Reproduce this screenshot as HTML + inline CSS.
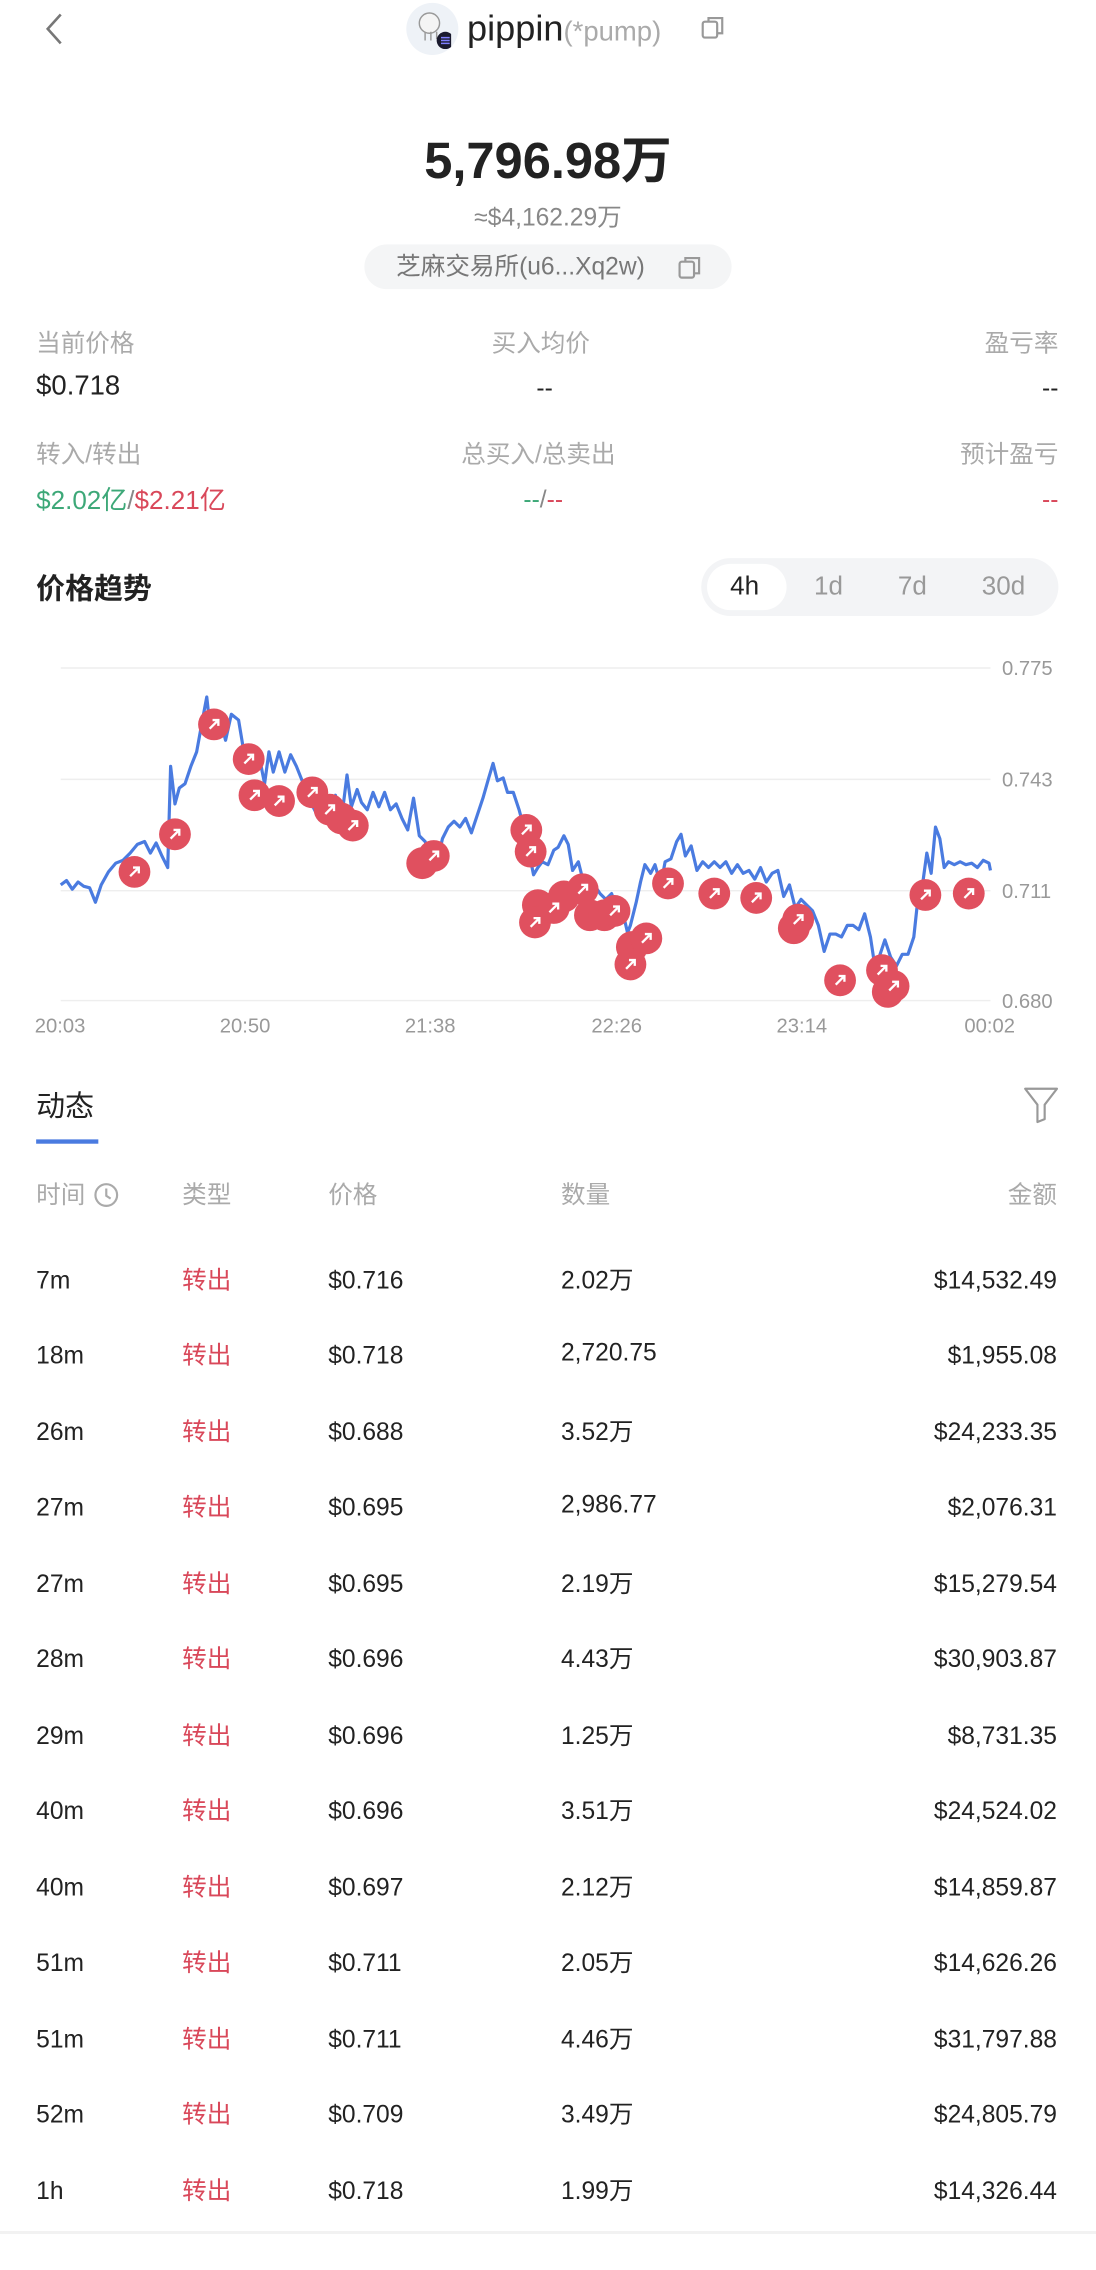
<!DOCTYPE html>
<html><head><meta charset="utf-8">
<style>
html,body{margin:0;padding:0;background:#fff;}
body{width:1096px;height:2270px;overflow:hidden;}
#w{width:758px;height:1570px;position:relative;transform:scale(1.44591);transform-origin:0 0;font-family:"Liberation Sans","Noto Sans CJK SC",sans-serif;color:#222;}
.a{position:absolute;white-space:nowrap;line-height:1.15em;}
.g{color:#aaa;}
.row{position:absolute;left:0;width:758px;height:20px;font-size:17px;}
.row span{position:absolute;top:3px;line-height:20px;}
</style></head><body><div id="w">
<svg class="a" style="left:28px;top:8px" width="20" height="24" viewBox="0 0 20 24"><path d="M14 2 L5 12 L14 22" fill="none" stroke="#777" stroke-width="1.8"/></svg>
<div class="a" style="left:281px;top:2px;width:36px;height:36px;border-radius:50%;background:#eef2f7"></div>
<svg class="a" style="left:286px;top:4px" width="26" height="30" viewBox="0 0 26 30"><circle cx="11" cy="12" r="7" fill="#f4f4f4" stroke="#999" stroke-width="1"/><path d="M8 18 v6 M12 18 v6 M16 18 v5" stroke="#999" stroke-width="1"/><circle cx="22" cy="24" r="6" fill="#1a1a2e"/><path d="M19 22h6M19 24h6M19 26h6" stroke="#7f7fff" stroke-width="1"/></svg>
<div class="a" style="left:323px;top:6px;font-size:25px;color:#222">pippin<span style="color:#aaa;font-size:19px">(*pump)</span></div>
<svg class="a" style="left:484px;top:10px" width="18" height="18" viewBox="0 0 18 18"><rect x="2" y="5" width="10" height="11" rx="1.5" fill="none" stroke="#999" stroke-width="1.5"/><path d="M6 5V2.5h9.5V13H12" fill="none" stroke="#999" stroke-width="1.5"/></svg>
<div class="a" style="left:0;width:758px;text-align:center;top:92px;font-size:35px;font-weight:bold;color:#222">5,796.98万</div>
<div class="a" style="left:0;width:758px;text-align:center;top:141px;font-size:17px;color:#888">≈$4,162.29万</div>
<div class="a" style="left:252px;top:169px;width:254px;height:31px;border-radius:16px;background:#f4f5f6"></div>
<div class="a" style="left:274px;top:175px;font-size:17px;color:#777">芝麻交易所(u6...Xq2w)</div>
<svg class="a" style="left:468px;top:176px" width="18" height="18" viewBox="0 0 18 18"><rect x="2" y="5" width="10" height="11" rx="1.5" fill="none" stroke="#999" stroke-width="1.5"/><path d="M6 5V2.5h9.5V13H12" fill="none" stroke="#999" stroke-width="1.5"/></svg>

<div class="a g" style="left:25px;top:228px;font-size:17px">当前价格</div>
<div class="a g" style="left:340px;top:228px;font-size:17px">买入均价</div>
<div class="a g" style="right:26px;top:228px;font-size:17px">盈亏率</div>
<div class="a" style="left:25px;top:257px;font-size:19px">$0.718</div>
<div class="a" style="left:371px;top:259px;font-size:17px">--</div>
<div class="a" style="right:26px;top:259px;font-size:17px">--</div>
<div class="a g" style="left:25px;top:305px;font-size:17px">转入/转出</div>
<div class="a g" style="left:319px;top:305px;font-size:17px">总买入/总卖出</div>
<div class="a g" style="right:26px;top:305px;font-size:17px">预计盈亏</div>
<div class="a" style="left:25px;top:336px;font-size:18px"><span style="color:#3da878">$2.02亿</span><span style="color:#888">/</span><span style="color:#d9485a">$2.21亿</span></div>
<div class="a" style="left:362px;top:336px;font-size:17px"><span style="color:#3da878">--</span><span style="color:#888">/</span><span style="color:#d9485a">--</span></div>
<div class="a" style="right:26px;top:336px;font-size:17px;color:#d9485a">--</div>

<div class="a" style="left:25px;top:397px;font-size:20px;font-weight:bold">价格趋势</div>
<div class="a" style="left:485px;top:386px;width:247px;height:40px;border-radius:20px;background:#f3f4f6"></div>
<div class="a" style="left:489px;top:390px;width:55px;height:32px;border-radius:16px;background:#fff"></div>
<div class="a" style="left:505px;top:395px;font-size:18px;color:#222">4h</div>
<div class="a" style="left:563px;top:395px;font-size:18px;color:#999">1d</div>
<div class="a" style="left:621px;top:395px;font-size:18px;color:#999">7d</div>
<div class="a" style="left:679px;top:395px;font-size:18px;color:#999">30d</div>

<svg class="a" style="left:0;top:440px" width="758" height="290" viewBox="0 440 758 290">
<g stroke="#eee" stroke-width="1"><line x1="42" y1="462" x2="685" y2="462"/><line x1="42" y1="539" x2="685" y2="539"/><line x1="42" y1="616" x2="685" y2="616"/><line x1="42" y1="692" x2="685" y2="692"/></g>
<g font-family="Liberation Sans" font-size="14" fill="#999"><text x="693" y="467">0.775</text><text x="693" y="544">0.743</text><text x="693" y="621">0.711</text><text x="693" y="697">0.680</text>
<text x="24" y="714">20:03</text><text x="152" y="714">20:50</text><text x="280" y="714">21:38</text><text x="409" y="714">22:26</text><text x="537" y="714">23:14</text><text x="667" y="714">00:02</text></g>
<polyline fill="none" stroke="#4a7be0" stroke-width="2.2" stroke-linejoin="round" points="42,612 46,609 50,615 54,610 58,613 62,614 66,624 70,612 75,603 80,597 85,595 90,590 95,584 100,582 104,590 108,583 112,592 116,600 118,530 121,556 124,545 128,542 132,530 136,520 140,498 143,482 146,510 149,492 153,500 156,512 160,494 165,498 168,516 172,526 175,530 179,522 183,542 186,520 189,534 193,520 197,534 201,522 205,530 209,540 213,548 216,557 220,565 224,545 228,562 232,550 236,568 240,536 243,558 247,546 250,555 254,560 258,548 262,558 266,548 270,560 274,556 278,566 282,574 286,552 290,578 294,582 298,592 302,598 306,580 310,572 314,568 318,572 322,566 326,576 330,564 334,552 338,538 341,528 344,540 348,538 351,548 355,548 359,560 363,575 366,590 369,605 372,600 375,596 379,598 383,588 386,586 390,578 393,584 396,602 400,596 403,608 407,616 411,612 415,618 419,622 423,618 427,630 431,632 434,645 436,640 440,624 443,610 446,598 450,604 453,598 457,612 460,596 464,594 468,582 471,577 474,592 478,585 482,602 486,596 490,600 494,596 498,600 502,596 506,604 510,598 514,604 518,602 522,608 526,600 530,610 534,604 538,602 542,620 546,612 550,628 554,622 558,626 562,630 566,640 570,658 574,646 578,646 582,648 586,640 590,640 594,643 598,632 602,648 605,668 608,662 612,650 616,662 620,668 624,660 628,660 632,648 635,620 638,612 641,590 644,604 647,572 650,580 653,600 656,596 660,598 664,596 668,598 672,597 676,600 680,595 684,597 685,602"/>
<g fill="#e0505f"><circle cx="93" cy="603" r="11"/><circle cx="121" cy="577" r="11"/><circle cx="148" cy="501" r="11"/><circle cx="172" cy="525" r="11"/><circle cx="176" cy="550" r="11"/><circle cx="193" cy="554" r="11"/><circle cx="216" cy="548" r="11"/><circle cx="228" cy="560" r="11"/><circle cx="236" cy="566" r="11"/><circle cx="244" cy="571" r="11"/><circle cx="292" cy="597" r="11"/><circle cx="300" cy="592" r="11"/><circle cx="364" cy="574" r="11"/><circle cx="367" cy="589" r="11"/><circle cx="372" cy="626" r="11"/><circle cx="370" cy="638" r="11"/><circle cx="383" cy="628" r="11"/><circle cx="390" cy="620" r="11"/><circle cx="403" cy="615" r="11"/><circle cx="408" cy="633" r="11"/><circle cx="418" cy="633" r="11"/><circle cx="425" cy="630" r="11"/><circle cx="437" cy="655" r="11"/><circle cx="436" cy="667" r="11"/><circle cx="447" cy="649" r="11"/><circle cx="462" cy="611" r="11"/><circle cx="494" cy="618" r="11"/><circle cx="523" cy="621" r="11"/><circle cx="549" cy="642" r="11"/><circle cx="552" cy="636" r="11"/><circle cx="581" cy="678" r="11"/><circle cx="610" cy="671" r="11"/><circle cx="614" cy="686" r="11"/><circle cx="618" cy="682" r="11"/><circle cx="640" cy="619" r="11"/><circle cx="670" cy="618" r="11"/></g>
<g stroke="#fff" stroke-width="1.6" fill="none">
<path d="M90 606l6-6m-4 0h4v4"/><path d="M118 580l6-6m-4 0h4v4"/><path d="M145 504l6-6m-4 0h4v4"/><path d="M169 528l6-6m-4 0h4v4"/><path d="M173 553l6-6m-4 0h4v4"/><path d="M190 557l6-6m-4 0h4v4"/><path d="M213 551l6-6m-4 0h4v4"/><path d="M225 563l6-6m-4 0h4v4"/><path d="M241 574l6-6m-4 0h4v4"/><path d="M297 595l6-6m-4 0h4v4"/><path d="M361 577l6-6m-4 0h4v4"/><path d="M364 592l6-6m-4 0h4v4"/><path d="M367 641l6-6m-4 0h4v4"/><path d="M380 631l6-6m-4 0h4v4"/><path d="M400 618l6-6m-4 0h4v4"/><path d="M422 633l6-6m-4 0h4v4"/><path d="M433 670l6-6m-4 0h4v4"/><path d="M444 652l6-6m-4 0h4v4"/><path d="M459 614l6-6m-4 0h4v4"/><path d="M491 621l6-6m-4 0h4v4"/><path d="M520 624l6-6m-4 0h4v4"/><path d="M549 639l6-6m-4 0h4v4"/><path d="M578 681l6-6m-4 0h4v4"/><path d="M607 674l6-6m-4 0h4v4"/><path d="M615 685l6-6m-4 0h4v4"/><path d="M637 622l6-6m-4 0h4v4"/><path d="M667 621l6-6m-4 0h4v4"/></g>
</svg>

<div class="a" style="left:25px;top:755px;font-size:20px">动态</div>
<div class="a" style="left:25px;top:788px;width:43px;height:3px;background:#4a7be0"></div>
<svg class="a" style="left:707px;top:750px" width="26" height="28" viewBox="0 0 26 28"><path d="M2 3h22l-8.5 11v10l-5 2V14z" fill="none" stroke="#999" stroke-width="1.5" stroke-linejoin="round"/></svg>

<div class="row g" style="top:814px"><span style="left:25px">时间</span><svg style="position:absolute;left:64px;top:3px" width="19" height="19" viewBox="0 0 19 19"><circle cx="9.5" cy="9.5" r="7.5" fill="none" stroke="#aaa" stroke-width="1.5"/><path d="M9.5 5v5l3 2" fill="none" stroke="#aaa" stroke-width="1.5"/></svg><span style="left:126px">类型</span><span style="left:227px">价格</span><span style="left:388px">数量</span><span style="right:27px">金额</span></div>

<div class="row" style="top:873px"><span style="left:25px">7m</span><span style="left:126px;color:#d9485a">转出</span><span style="left:227px">$0.716</span><span style="left:388px">2.02万</span><span style="right:27px">$14,532.49</span></div>
<div class="row" style="top:925px"><span style="left:25px">18m</span><span style="left:126px;color:#d9485a">转出</span><span style="left:227px">$0.718</span><span style="left:388px;top:1px">2,720.75</span><span style="right:27px">$1,955.08</span></div>
<div class="row" style="top:978px"><span style="left:25px">26m</span><span style="left:126px;color:#d9485a">转出</span><span style="left:227px">$0.688</span><span style="left:388px">3.52万</span><span style="right:27px">$24,233.35</span></div>
<div class="row" style="top:1030px"><span style="left:25px">27m</span><span style="left:126px;color:#d9485a">转出</span><span style="left:227px">$0.695</span><span style="left:388px;top:1px">2,986.77</span><span style="right:27px">$2,076.31</span></div>
<div class="row" style="top:1083px"><span style="left:25px">27m</span><span style="left:126px;color:#d9485a">转出</span><span style="left:227px">$0.695</span><span style="left:388px">2.19万</span><span style="right:27px">$15,279.54</span></div>
<div class="row" style="top:1135px"><span style="left:25px">28m</span><span style="left:126px;color:#d9485a">转出</span><span style="left:227px">$0.696</span><span style="left:388px">4.43万</span><span style="right:27px">$30,903.87</span></div>
<div class="row" style="top:1188px"><span style="left:25px">29m</span><span style="left:126px;color:#d9485a">转出</span><span style="left:227px">$0.696</span><span style="left:388px">1.25万</span><span style="right:27px">$8,731.35</span></div>
<div class="row" style="top:1240px"><span style="left:25px">40m</span><span style="left:126px;color:#d9485a">转出</span><span style="left:227px">$0.696</span><span style="left:388px">3.51万</span><span style="right:27px">$24,524.02</span></div>
<div class="row" style="top:1293px"><span style="left:25px">40m</span><span style="left:126px;color:#d9485a">转出</span><span style="left:227px">$0.697</span><span style="left:388px">2.12万</span><span style="right:27px">$14,859.87</span></div>
<div class="row" style="top:1345px"><span style="left:25px">51m</span><span style="left:126px;color:#d9485a">转出</span><span style="left:227px">$0.711</span><span style="left:388px">2.05万</span><span style="right:27px">$14,626.26</span></div>
<div class="row" style="top:1398px"><span style="left:25px">51m</span><span style="left:126px;color:#d9485a">转出</span><span style="left:227px">$0.711</span><span style="left:388px">4.46万</span><span style="right:27px">$31,797.88</span></div>
<div class="row" style="top:1450px"><span style="left:25px">52m</span><span style="left:126px;color:#d9485a">转出</span><span style="left:227px">$0.709</span><span style="left:388px">3.49万</span><span style="right:27px">$24,805.79</span></div>
<div class="row" style="top:1503px"><span style="left:25px">1h</span><span style="left:126px;color:#d9485a">转出</span><span style="left:227px">$0.718</span><span style="left:388px">1.99万</span><span style="right:27px">$14,326.44</span></div>
<div class="a" style="left:0;top:1543px;width:758px;height:2px;background:#f2f2f2"></div>
</div></body></html>
